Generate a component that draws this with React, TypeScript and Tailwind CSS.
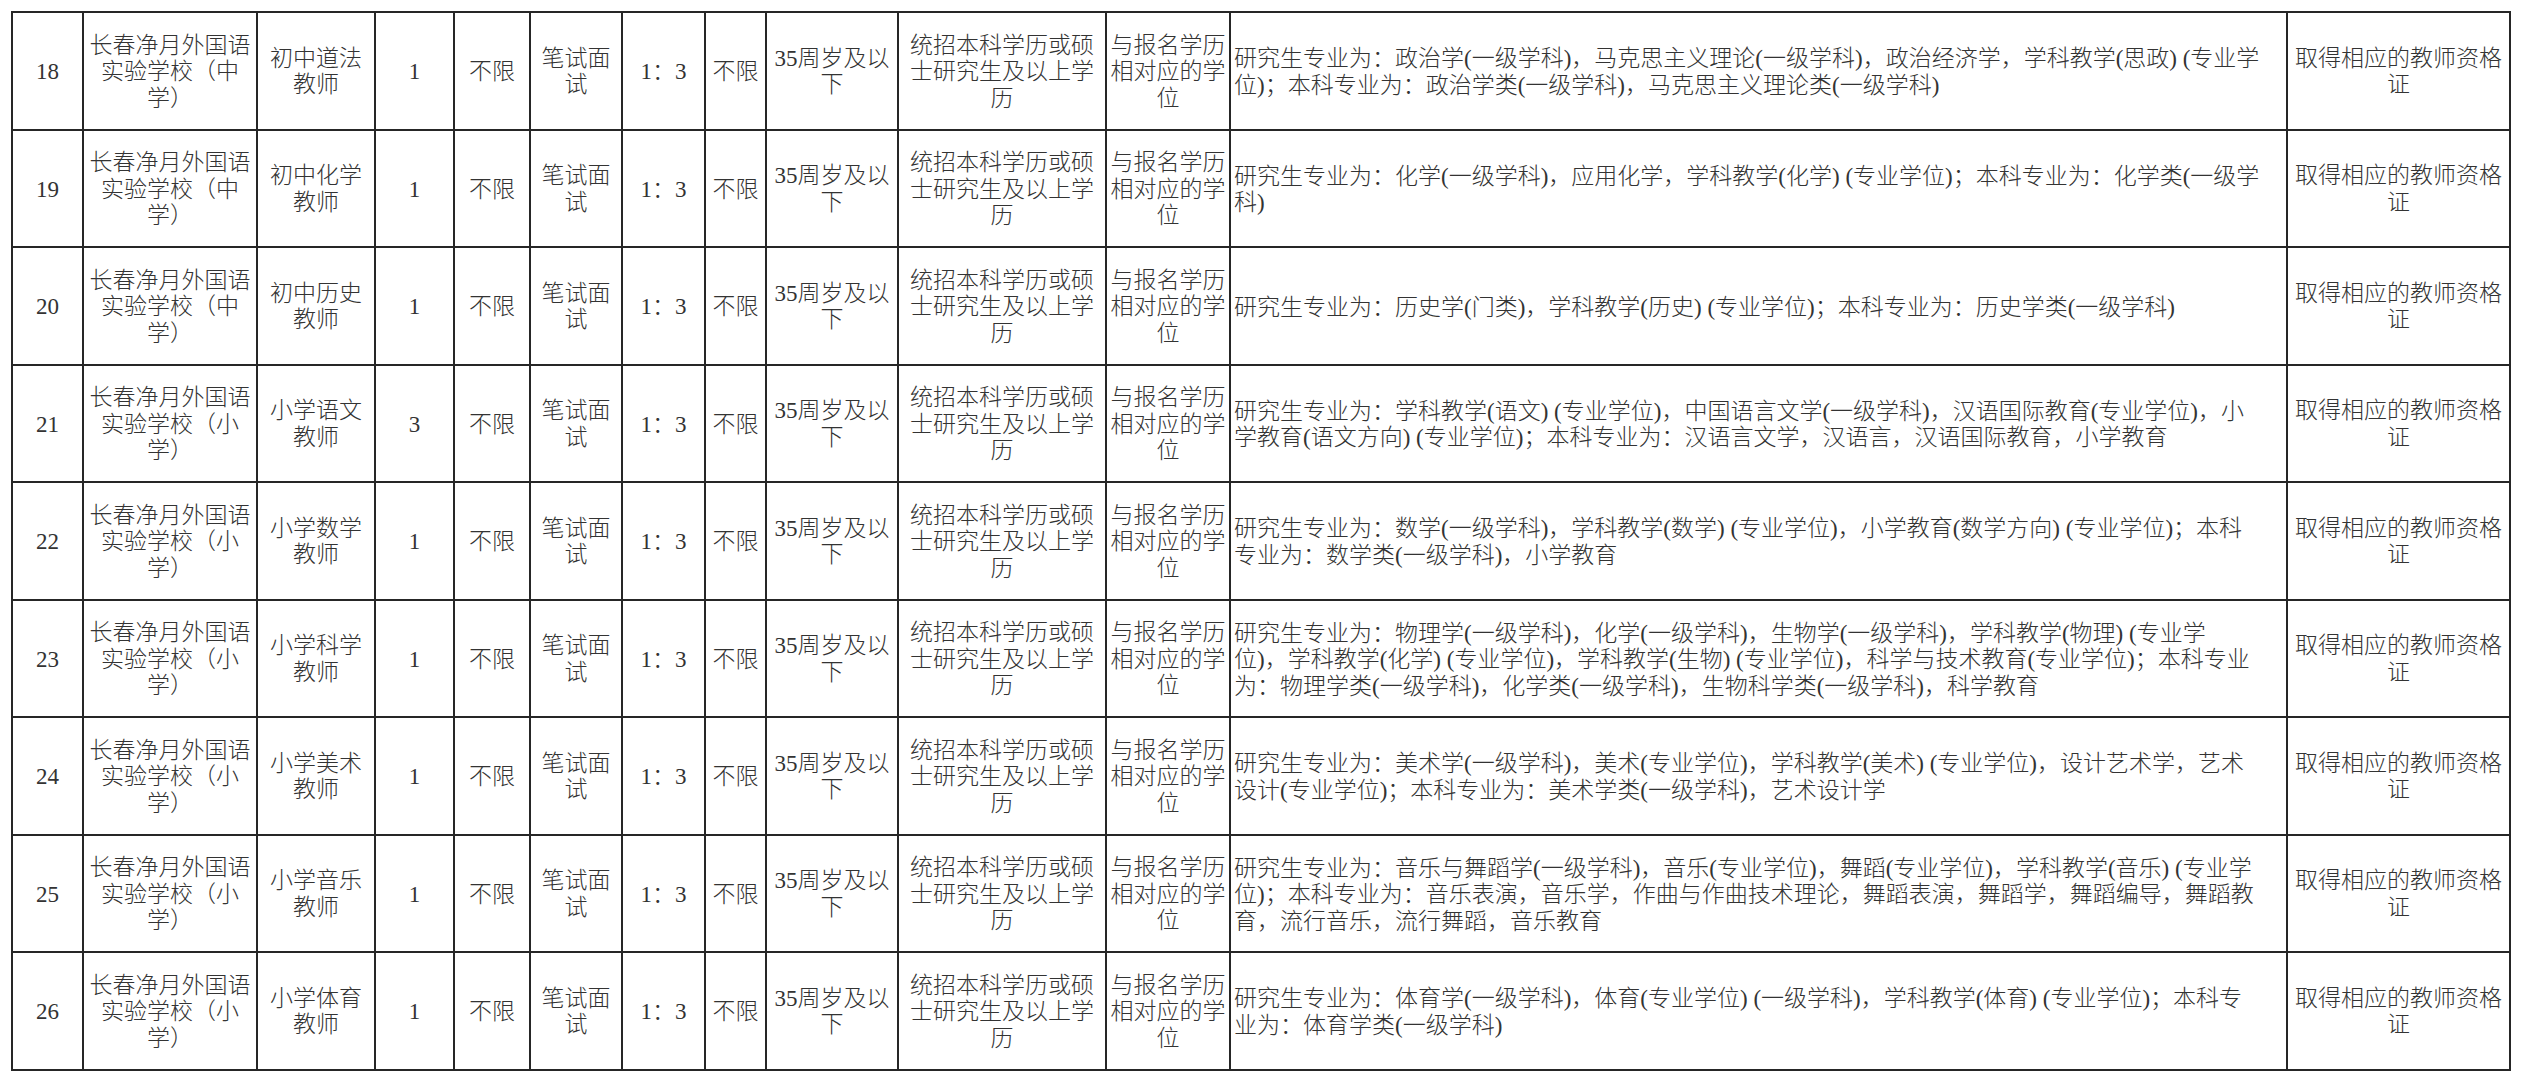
import React from "react";

type Row = {
  no: string;
  level: string;
  post: string;
  count: string;
  majors: string[];
};

const rows: Row[] = [
  {
    no: "18",
    level: "中",
    post: "初中道法",
    count: "1",
    majors: [
      "研究生专业为：政治学(一级学科)，马克思主义理论(一级学科)，政治经济学，学科教学(思政) (专业学",
      "位)；本科专业为：政治学类(一级学科)，马克思主义理论类(一级学科)",
    ],
  },
  {
    no: "19",
    level: "中",
    post: "初中化学",
    count: "1",
    majors: [
      "研究生专业为：化学(一级学科)，应用化学，学科教学(化学) (专业学位)；本科专业为：化学类(一级学",
      "科)",
    ],
  },
  {
    no: "20",
    level: "中",
    post: "初中历史",
    count: "1",
    majors: ["研究生专业为：历史学(门类)，学科教学(历史) (专业学位)；本科专业为：历史学类(一级学科)"],
  },
  {
    no: "21",
    level: "小",
    post: "小学语文",
    count: "3",
    majors: [
      "研究生专业为：学科教学(语文) (专业学位)，中国语言文学(一级学科)，汉语国际教育(专业学位)，小",
      "学教育(语文方向) (专业学位)；本科专业为：汉语言文学，汉语言，汉语国际教育，小学教育",
    ],
  },
  {
    no: "22",
    level: "小",
    post: "小学数学",
    count: "1",
    majors: [
      "研究生专业为：数学(一级学科)，学科教学(数学) (专业学位)，小学教育(数学方向) (专业学位)；本科",
      "专业为：数学类(一级学科)，小学教育",
    ],
  },
  {
    no: "23",
    level: "小",
    post: "小学科学",
    count: "1",
    majors: [
      "研究生专业为：物理学(一级学科)，化学(一级学科)，生物学(一级学科)，学科教学(物理) (专业学",
      "位)，学科教学(化学) (专业学位)，学科教学(生物) (专业学位)，科学与技术教育(专业学位)；本科专业",
      "为：物理学类(一级学科)，化学类(一级学科)，生物科学类(一级学科)，科学教育",
    ],
  },
  {
    no: "24",
    level: "小",
    post: "小学美术",
    count: "1",
    majors: [
      "研究生专业为：美术学(一级学科)，美术(专业学位)，学科教学(美术) (专业学位)，设计艺术学，艺术",
      "设计(专业学位)；本科专业为：美术学类(一级学科)，艺术设计学",
    ],
  },
  {
    no: "25",
    level: "小",
    post: "小学音乐",
    count: "1",
    majors: [
      "研究生专业为：音乐与舞蹈学(一级学科)，音乐(专业学位)，舞蹈(专业学位)，学科教学(音乐) (专业学",
      "位)；本科专业为：音乐表演，音乐学，作曲与作曲技术理论，舞蹈表演，舞蹈学，舞蹈编导，舞蹈教",
      "育，流行音乐，流行舞蹈，音乐教育",
    ],
  },
  {
    no: "26",
    level: "小",
    post: "小学体育",
    count: "1",
    majors: [
      "研究生专业为：体育学(一级学科)，体育(专业学位) (一级学科)，学科教学(体育) (专业学位)；本科专",
      "业为：体育学类(一级学科)",
    ],
  },
];

function Cell({ lines, left = false }: { lines: string[]; left?: boolean }) {
  return (
    <div
      className={
        left
          ? "flex flex-col justify-center items-start pl-[3px] pt-[4px] border-r-2 border-b-2 border-[#262626] overflow-hidden"
          : "flex flex-col justify-center items-center pt-[3px] border-r-2 border-b-2 border-[#262626] overflow-hidden"
      }
    >
      {lines.map((l, i) => (
        <div key={i} className="whitespace-pre">
          {l}
        </div>
      ))}
    </div>
  );
}

export default function App() {
  return (
    <div className="bg-white w-[2521px] h-[1080px] pt-[11px] pl-[11px] text-[#333333] font-light font-['Liberation_Serif','Noto_Sans_CJK_SC',serif] text-[23px] leading-[26.5px]">
      <div className="grid w-max grid-cols-[71px_174px_118px_79px_76px_92px_83px_61px_132px_208px_124px_1057px_223px] auto-rows-[117.5px] border-l-2 border-t-2 border-[#262626]">
        {rows.map((r) => (
          <React.Fragment key={r.no}>
            <Cell lines={[r.no]} />
            <Cell lines={["长春净月外国语", `实验学校（${r.level}`, "学）"]} />
            <Cell lines={[r.post, "教师"]} />
            <Cell lines={[r.count]} />
            <Cell lines={["不限"]} />
            <Cell lines={["笔试面", "试"]} />
            <Cell lines={["1：3"]} />
            <Cell lines={["不限"]} />
            <Cell lines={["35周岁及以", "下"]} />
            <Cell lines={["统招本科学历或硕", "士研究生及以上学", "历"]} />
            <Cell lines={["与报名学历", "相对应的学", "位"]} />
            <Cell lines={r.majors} left />
            <Cell lines={["取得相应的教师资格", "证"]} />
          </React.Fragment>
        ))}
      </div>
    </div>
  );
}
